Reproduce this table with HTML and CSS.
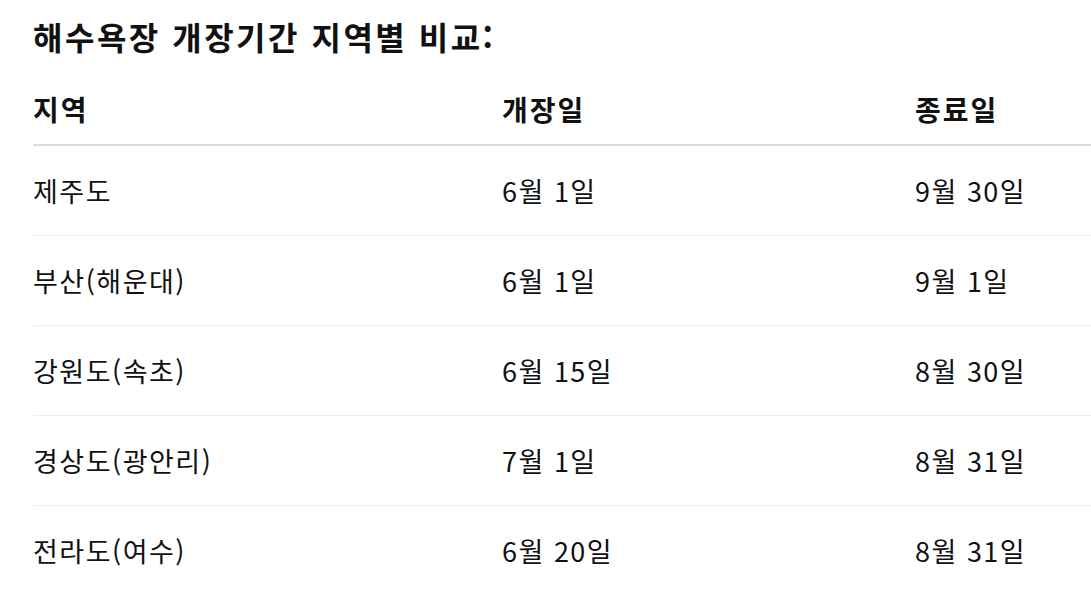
FILE: index.html
```html
<!DOCTYPE html>
<html lang="ko">
<head>
<meta charset="utf-8">
<link rel="stylesheet" href="styles.css">
</head>
<body>
<main class="page">
  <h2 class="title">해수욕장 개장기간 지역별 비교:</h2>
  <table class="compare">
    <colgroup>
      <col class="c-region">
      <col class="c-open">
      <col class="c-close">
    </colgroup>
    <thead>
      <tr><th>지역</th><th>개장일</th><th>종료일</th></tr>
    </thead>
    <tbody>
      <tr><td>제주도</td><td>6월 1일</td><td>9월 30일</td></tr>
      <tr><td>부산(해운대)</td><td>6월 1일</td><td>9월 1일</td></tr>
      <tr><td>강원도(속초)</td><td>6월 15일</td><td>8월 30일</td></tr>
      <tr><td>경상도(광안리)</td><td>7월 1일</td><td>8월 31일</td></tr>
      <tr><td>전라도(여수)</td><td>6월 20일</td><td>8월 31일</td></tr>
    </tbody>
  </table>
</main>
</body>
</html>
```

FILE: styles.css
```css
html, body {
  margin: 0;
  padding: 0;
  background: #ffffff;
}
body {
  font-family: "Noto Sans CJK KR", "Noto Sans", sans-serif;
  color: #111111;
  overflow: hidden;
}
.page {
  padding: 0 0 0 33px;
}
.title {
  margin: 0;
  padding-top: 12px;
  height: 54px;
  line-height: 48px;
  font-size: 32px;
  font-weight: 700;
  letter-spacing: 2.5px;
}
.compare {
  width: 1058px;
  border-collapse: collapse;
  table-layout: fixed;
}
.c-region { width: 469px; }
.c-open { width: 413px; }
.compare th,
.compare td {
  padding: 0;
  text-align: left;
  vertical-align: middle;
}
.compare th {
  height: 70px;
  padding-top: 8px;
  font-size: 28px;
  font-weight: 700;
  letter-spacing: 2px;
  border-bottom: 2px solid #dddddd;
}
.compare td {
  height: 89px;
  font-size: 27px;
  font-weight: 400;
  letter-spacing: 1.5px;
  border-bottom: 1px solid #eeeeee;
}
.compare tbody tr:last-child td {
  border-bottom: none;
}
```
